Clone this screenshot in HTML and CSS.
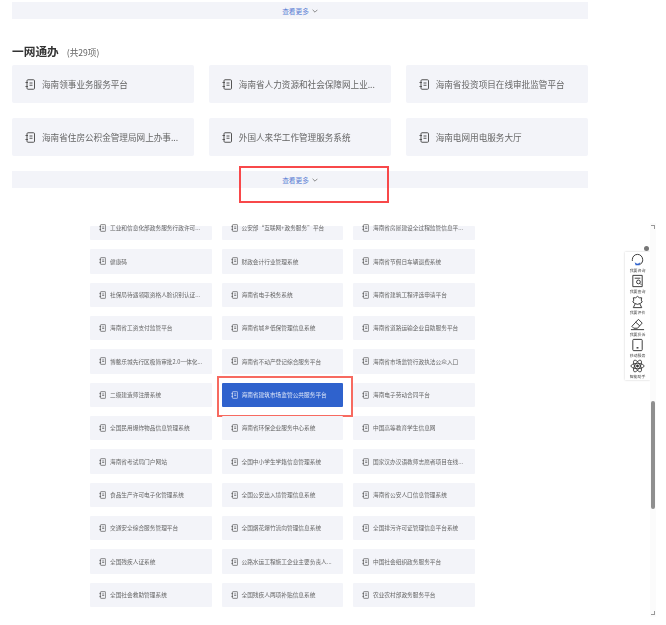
FILE: index.html
```html
<!DOCTYPE html>
<html lang="zh">
<head>
    <meta charset="UTF-8">
    <title>一网通办</title>
    <link rel="stylesheet" href="styles.css">
</head>
<body>
    <svg class="defs" width="0" height="0">
        <symbol id="doc" viewBox="0 0 20 22">
            <path d="M4 3.500 Q4 1.500 6 1.500 H17 Q19 1.500 19 3.500 V18.500 Q19 20.500 17 20.500 H6 Q4 20.500 4 18.500 Z" fill="none" stroke="currentColor" stroke-width="2"/>
            <path d="M1 7 H6 M1 15 H6 M9 8 H15 M9 12.500 H15" fill="none" stroke="currentColor" stroke-width="2"/>
        </symbol>
    </svg>

    <section class="top">
        <div class="more"><span>查看更多</span><svg class="chev" viewBox="0 0 10 6"><path d="M1 1 L5 5 L9 1"/></svg></div>
        <h2 class="title">一网通办<small>(共29项)</small></h2>
        <div class="grid-big">
            <a class="card"><svg class="ico"><use href="#doc"/></svg>海南领事业务服务平台</a>
            <a class="card"><svg class="ico"><use href="#doc"/></svg>海南省人力资源和社会保障网上业...</a>
            <a class="card"><svg class="ico"><use href="#doc"/></svg>海南省投资项目在线审批监管平台</a>
            <a class="card"><svg class="ico"><use href="#doc"/></svg>海南省住房公积金管理局网上办事...</a>
            <a class="card"><svg class="ico"><use href="#doc"/></svg>外国人来华工作管理服务系统</a>
            <a class="card"><svg class="ico"><use href="#doc"/></svg>海南电网用电服务大厅</a>
        </div>
        <div class="more more-last">
            <span>查看更多</span><svg class="chev" viewBox="0 0 10 6"><path d="M1 1 L5 5 L9 1"/></svg>
            <i class="mark mark-more"></i>
        </div>
    </section>

    <section class="bottom">
        <div class="grid-small">
            <a class="item item-cut"><svg class="ico"><use href="#doc"/></svg>工业和信息化部政务服务行政许可...</a>
            <a class="item item-cut"><svg class="ico"><use href="#doc"/></svg>公安部“互联网+政务服务”平台</a>
            <a class="item item-cut"><svg class="ico"><use href="#doc"/></svg>海南省房屋建设全过程监管信息平...</a>
            <a class="item"><svg class="ico"><use href="#doc"/></svg>健康码</a>
            <a class="item"><svg class="ico"><use href="#doc"/></svg>财政会计行业管理系统</a>
            <a class="item"><svg class="ico"><use href="#doc"/></svg>海南省节假日车辆退费系统</a>
            <a class="item"><svg class="ico"><use href="#doc"/></svg>社保局待遇领取资格人脸识别认证...</a>
            <a class="item"><svg class="ico"><use href="#doc"/></svg>海南省电子税务系统</a>
            <a class="item"><svg class="ico"><use href="#doc"/></svg>海南省建筑工程评选申请平台</a>
            <a class="item"><svg class="ico"><use href="#doc"/></svg>海南省工资支付监管平台</a>
            <a class="item"><svg class="ico"><use href="#doc"/></svg>海南省城乡低保管理信息系统</a>
            <a class="item"><svg class="ico"><use href="#doc"/></svg>海南省道路运输企业自助服务平台</a>
            <a class="item"><svg class="ico"><use href="#doc"/></svg>博鳌乐城先行区极简审批2.0一体化...</a>
            <a class="item"><svg class="ico"><use href="#doc"/></svg>海南省不动产登记综合服务平台</a>
            <a class="item"><svg class="ico"><use href="#doc"/></svg>海南省市场监管行政执法公众入口</a>
            <a class="item"><svg class="ico"><use href="#doc"/></svg>二级建造师注册系统</a>
            <a class="item item-on"><svg class="ico"><use href="#doc"/></svg>海南省建筑市场监管公共服务平台<i class="mark mark-item"></i></a>
            <a class="item"><svg class="ico"><use href="#doc"/></svg>海南电子劳动合同平台</a>
            <a class="item"><svg class="ico"><use href="#doc"/></svg>全国民用爆炸物品信息管理系统</a>
            <a class="item"><svg class="ico"><use href="#doc"/></svg>海南省环保企业服务中心系统</a>
            <a class="item"><svg class="ico"><use href="#doc"/></svg>中国高等教育学生信息网</a>
            <a class="item"><svg class="ico"><use href="#doc"/></svg>海南省考试局门户网站</a>
            <a class="item"><svg class="ico"><use href="#doc"/></svg>全国中小学生学籍信息管理系统</a>
            <a class="item"><svg class="ico"><use href="#doc"/></svg>国家汉办汉语教师志愿者项目在线...</a>
            <a class="item"><svg class="ico"><use href="#doc"/></svg>食品生产许可电子化管理系统</a>
            <a class="item"><svg class="ico"><use href="#doc"/></svg>全国公安出入境管理信息系统</a>
            <a class="item"><svg class="ico"><use href="#doc"/></svg>海南省公安人口信息管理系统</a>
            <a class="item"><svg class="ico"><use href="#doc"/></svg>交通安全综合服务管理平台</a>
            <a class="item"><svg class="ico"><use href="#doc"/></svg>全国烟花爆竹流向管理信息系统</a>
            <a class="item"><svg class="ico"><use href="#doc"/></svg>全国排污许可证管理信息平台系统</a>
            <a class="item"><svg class="ico"><use href="#doc"/></svg>全国残疾人证系统</a>
            <a class="item"><svg class="ico"><use href="#doc"/></svg>公路水运工程施工企业主要负责人...</a>
            <a class="item"><svg class="ico"><use href="#doc"/></svg>中国社会组织政务服务平台</a>
            <a class="item"><svg class="ico"><use href="#doc"/></svg>全国社会救助管理系统</a>
            <a class="item"><svg class="ico"><use href="#doc"/></svg>全国残疾人两项补贴信息系统</a>
            <a class="item"><svg class="ico"><use href="#doc"/></svg>农业农村部政务服务平台</a>
        </div>
    </section>

    <!-- side widget and the page scrollbar float over the page -->
    <i class="side-close"></i>
    <aside class="side">
        <a class="side-btn">
            <svg viewBox="0 0 16 14"><path d="M2.500 8 V6.500 A5.500 5.500 0 0 1 13.500 6.500 V8 Q13 11 10 12" fill="none" stroke="#333" stroke-width="1"/><path d="M5 9.500 Q8 12.500 11 9.500 L10 12.500 H6 Z" fill="#2f62cd"/></svg>
            <span>我要咨询</span>
        </a>
        <a class="side-btn">
            <svg viewBox="0 0 16 14"><path d="M3 1 H13 V13 H3 Z" fill="none" stroke="#333" stroke-width="1"/><circle cx="9" cy="8" r="2" fill="none" stroke="#333" stroke-width="1"/><path d="M10.500 9.500 L12 11 M5 4 H11" stroke="#333" stroke-width="1"/></svg>
            <span>我要查询</span>
        </a>
        <a class="side-btn">
            <svg viewBox="0 0 16 14"><path d="M8 1 L10 2.500 H12.500 L12 5 L13 7 L11 8.500 L8 9.500 L5 8.500 L3 7 L4 5 L3.500 2.500 H6 Z" fill="none" stroke="#333" stroke-width="1"/><path d="M5.500 9 L3.500 13 H12.500 L10.500 9" fill="none" stroke="#333" stroke-width="1"/></svg>
            <span>我要评价</span>
        </a>
        <a class="side-btn">
            <svg viewBox="0 0 16 14"><path d="M2 9.500 L9 2 L13 6 L8 11.500 H4 Z" fill="none" stroke="#333" stroke-width="1"/><path d="M6 5 L10.500 9 M1 13 H15" fill="none" stroke="#333" stroke-width="1"/></svg>
            <span>我要投诉</span>
        </a>
        <a class="side-btn">
            <svg viewBox="0 0 16 14"><rect x="3" y="1" width="10" height="12" rx="1" fill="none" stroke="#333" stroke-width="1"/><path d="M7 10 H9" stroke="#333" stroke-width="1.500"/></svg>
            <span>移动服务</span>
        </a>
        <a class="side-btn">
            <svg viewBox="0 0 16 14"><ellipse cx="8" cy="7" rx="7" ry="2.800" fill="none" stroke="#333" stroke-width=".9"/><ellipse cx="8" cy="7" rx="7" ry="2.800" transform="rotate(60 8 7)" fill="none" stroke="#333" stroke-width=".9"/><ellipse cx="8" cy="7" rx="7" ry="2.800" transform="rotate(120 8 7)" fill="none" stroke="#333" stroke-width=".9"/><circle cx="8" cy="7" r="1.500" fill="#333"/></svg>
            <span>智能助手</span>
        </a>
    </aside>
    <div class="scrollbar">
        <span class="scroll-arrow"></span>
        <span class="scroll-thumb"></span>
        <span class="scroll-arrow scroll-arrow-down"></span>
    </div>
</body>
</html>
```

FILE: styles.css
```css
html, body {
    margin: 0;
    padding: 0;
    height: 625px;
    overflow: hidden;
}
body {
    font-family: "Noto Sans CJK SC", "Noto Sans", sans-serif;
    background: #fff;
    color: #666;
    position: relative;
}
.defs {
    position: absolute;
}
/* the source capture is a soft upscale */
.top, .bottom, .side {
    filter: blur(0.4px);
}
.top {
    width: 576px;
    padding: 2px 0 0 12px;
}
.more {
    position: relative;
    height: 17px;
    background: #f3f4f9;
    display: flex;
    align-items: center;
    justify-content: center;
    gap: 3px;
    font-size: 6.700px;
    color: #5b80d4;
}
.more-last {
    margin-top: 15px;
}
.chev {
    width: 6px;
    height: 4px;
}
.chev path {
    fill: none;
    stroke: #777;
    stroke-width: 1.400;
}
.title {
    margin: 22px 0 4px;
    height: 20px;
    line-height: 20px;
    font-size: 11.700px;
    font-weight: 700;
    color: #333;
}
.title small {
    margin-left: 8px;
    font-size: 8.600px;
    font-weight: 400;
    color: #666;
}
.grid-big {
    display: grid;
    grid-template-columns: repeat(3, 1fr);
    column-gap: 14.500px;
    row-gap: 15px;
}
.card {
    height: 38px;
    padding-left: 13px;
    display: flex;
    align-items: center;
    gap: 7px;
    background: #f3f4f9;
    border-radius: 2px;
    font-size: 8.600px;
    white-space: nowrap;
    color: #666;
}
.card .ico {
    width: 10px;
    height: 11px;
    color: #555;
}
.bottom {
    margin: 38px 0 0 90px;
    width: 384.500px;
}
.grid-small {
    display: grid;
    grid-template-columns: repeat(3, 1fr);
    grid-template-rows: 14.200px;
    column-gap: 10px;
    grid-auto-rows: 24.300px;
    row-gap: 9.070px;
}
.item {
    position: relative;
    padding-left: 9px;
    display: flex;
    align-items: center;
    gap: 4px;
    background: #f3f4f9;
    border-radius: 1px;
    font-size: 5.700px;
    line-height: 1;
    white-space: nowrap;
    color: #666;
}
.item .ico {
    width: 7px;
    height: 8px;
    color: #555;
}
/* top row runs under the seam between the two captures */
.item-cut {
    box-sizing: border-box;
    padding-bottom: 10px;
}
.item-on {
    background: #2f62cd;
    color: #dfe7f8;
}
.item-on .ico {
    color: #dfe7f8;
}
/* red marks drawn on the screenshot */
.mark {
    position: absolute;
    box-sizing: border-box;
    border: 2px solid #f8484a;
}
.mark-more {
    left: 227px;
    top: -5px;
    width: 150px;
    height: 37px;
}
.mark-item {
    left: -5px;
    right: -10px;
    top: -7px;
    bottom: -10px;
    border-color: #f76a60;
}
.side-close {
    position: absolute;
    left: 644px;
    top: 246px;
    width: 5px;
    height: 5px;
    border-radius: 50%;
    background: #777;
}
.side {
    position: absolute;
    left: 625px;
    top: 252px;
    width: 25px;
    height: 128px;
    box-sizing: border-box;
    padding: 1px 0;
    display: flex;
    flex-direction: column;
    justify-content: space-between;
    background: #fff;
    box-shadow: 0 0 2px rgba(0, 0, 0, 0.2);
}
.side-btn {
    display: flex;
    flex-direction: column;
    align-items: center;
    font-size: 3.900px;
    line-height: 6px;
    color: #444;
}
.side-btn svg {
    width: 15px;
    height: 14px;
}
.scrollbar {
    position: absolute;
    left: 650px;
    top: 223px;
    width: 6px;
    height: 394px;
    background: #fbfbfb;
}
.scroll-arrow {
    position: absolute;
    left: 1px;
    top: 2px;
    width: 3px;
    height: 3px;
    border-top: 1px solid #999;
    border-right: 1px solid #999;
}
.scroll-arrow-down {
    top: auto;
    bottom: 2px;
    border-top: 0;
    border-bottom: 1px solid #999;
}
.scroll-thumb {
    position: absolute;
    left: 1px;
    top: 178px;
    width: 3.500px;
    height: 108px;
    border-radius: 2px;
    background: #8f8f8f;
}
```
